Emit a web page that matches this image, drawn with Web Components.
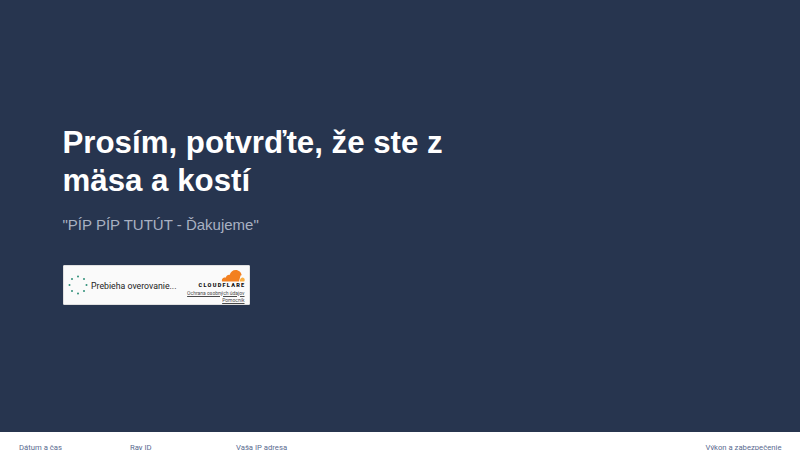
<!DOCTYPE html>
<html lang="sk">
<head>
<meta charset="utf-8">
<title>Overenie</title>
<style>
html, body { margin: 0; height: 100%; overflow: hidden; background: #27354f; }
body { font-family: "Liberation Sans", Arial, sans-serif; }
</style>
</head>
<body>
<check-page>
  <span slot="title">Prosím, potvrďte, že ste z mäsa a kostí</span>
  <span slot="quote">"PÍP PÍP TUTÚT - Ďakujeme"</span>
  <verify-widget slot="widget"></verify-widget>
  <page-footer slot="footer">
    <footer-item>Dátum a čas</footer-item>
    <footer-item>Ray ID</footer-item>
    <footer-item>Vaša IP adresa</footer-item>
    <footer-item slot="end">Výkon a zabezpečenie</footer-item>
  </page-footer>
</check-page>

<script>
(function () {
    "use strict";

    class CheckPage extends HTMLElement {
        constructor() {
            super();
            this.attachShadow({ mode: 'open' }).innerHTML = `
            <style>
                :host { display: flex; flex-direction: column; height: 450px; overflow: hidden; }
                main { flex: none; height: 432px; box-sizing: border-box; padding: 124px 62.5px 0; background: #27354f; }
                h1 { width: 400px; margin: 0; color: #fff; font-size: 31.25px; line-height: 37.5px; font-weight: 700; }
                p { margin: 14px 0 0; color: #a9b1c2; font-size: 15px; line-height: 23px; }
                .widget { margin-top: 28.5px; }
            </style>
            <main>
                <h1><slot name="title"></slot></h1>
                <p><slot name="quote"></slot></p>
                <div class="widget"><slot name="widget"></slot></div>
            </main>
            <slot name="footer"></slot>`;
        }
    }

    class VerifyWidget extends HTMLElement {
        constructor() {
            super();
            var dots = '';
            for (var i = 0; i < 8; i++) {
                var a = i * Math.PI / 4 - Math.PI / 2;
                var x = (10 + 8.5 * Math.cos(a)).toFixed(1);
                var y = (10 + 8.5 * Math.sin(a)).toFixed(1);
                dots += '<circle cx="' + x + '" cy="' + y + '" r="1" fill="#2f8f78"/>';
            }
            this.attachShadow({ mode: 'open' }).innerHTML = `
            <style>
                :host { display: block; width: 187.5px; height: 40.5px; }
                .box { display: flex; align-items: center; height: 100%; box-sizing: border-box; padding: 0 4.5px; background: #fafafa; border: 1px solid #e0e0e0; border-radius: 1px; color: #232323; font-family: Roboto, "Liberation Sans", sans-serif; }
                svg.spin { flex: none; width: 20px; height: 20px; }
                .label { flex: 1; margin-left: 3px; padding-top: 2px; font-size: 8.75px; white-space: nowrap; }
                .brand { display: flex; flex-direction: column; align-items: flex-end; align-self: flex-start; padding-top: 3px; }
                svg.cloud { display: block; width: 24px; height: 13px; }
                .name { font-size: 5.6px; font-weight: 900; letter-spacing: 1.25px; margin-right: -1px; line-height: 6px; color: #111; }
                a { font-size: 5px; line-height: 6px; color: #4a4a4a; text-decoration: underline; white-space: nowrap; }
                .legal { margin-top: 2px; margin-bottom: 1px; }
            </style>
            <div class="box">
                <svg class="spin" viewBox="0 0 20 20">${dots}</svg>
                <span class="label">Prebieha overovanie...</span>
                <div class="brand">
                    <svg class="cloud" viewBox="0 0 24 13">
                        <path fill="#f38020" d="M1 12.5c-.6-1.8.4-3.6 2.3-3.900.5 0 1-.1 1.400.1C5.300 6.700 7 5.600 8.700 5.900c.6-2.800 3-4.900 6-4.900 3.200 0 5.600 2.300 6 5.300-.4 0-.8.100-1.100.2L17.900 12.500z"/>
                        <path fill="#faae40" d="M18.700 12.500c.2-2 1-3.800 2.600-4 1.300-.1 2.300.9 2.400 2.200 0 .7-.2 1.300-.5 1.800z"/>
                    </svg>
                    <span class="name">CLOUDFLARE</span>
                    <a class="legal">Ochrana osobných údajov</a>
                    <a>Pomocník</a>
                </div>
            </div>`;
        }
    }

    class PageFooter extends HTMLElement {
        constructor() {
            super();
            this.attachShadow({ mode: 'open' }).innerHTML = `
            <style>
                :host { display: flex; flex: none; height: 18px; overflow: hidden; box-sizing: border-box; padding: 11px 18.5px 0 19px; background: #fff; }
                .start { flex: 1; display: grid; grid-template-columns: 111px 106px auto; }
            </style>
            <div class="start"><slot></slot></div>
            <slot name="end"></slot>`;
        }
    }

    class FooterItem extends HTMLElement {
        constructor() {
            super();
            this.attachShadow({ mode: 'open' }).innerHTML = `
            <style>
                :host { display: block; color: #5a6a90; font-size: 7.7px; line-height: 10px; white-space: nowrap; font-family: Roboto, "Liberation Sans", sans-serif; }
            </style>
            <slot></slot>`;
        }
    }

    customElements.define('check-page', CheckPage);
    customElements.define('verify-widget', VerifyWidget);
    customElements.define('page-footer', PageFooter);
    customElements.define('footer-item', FooterItem);
}())
</script>
</body>
</html>
